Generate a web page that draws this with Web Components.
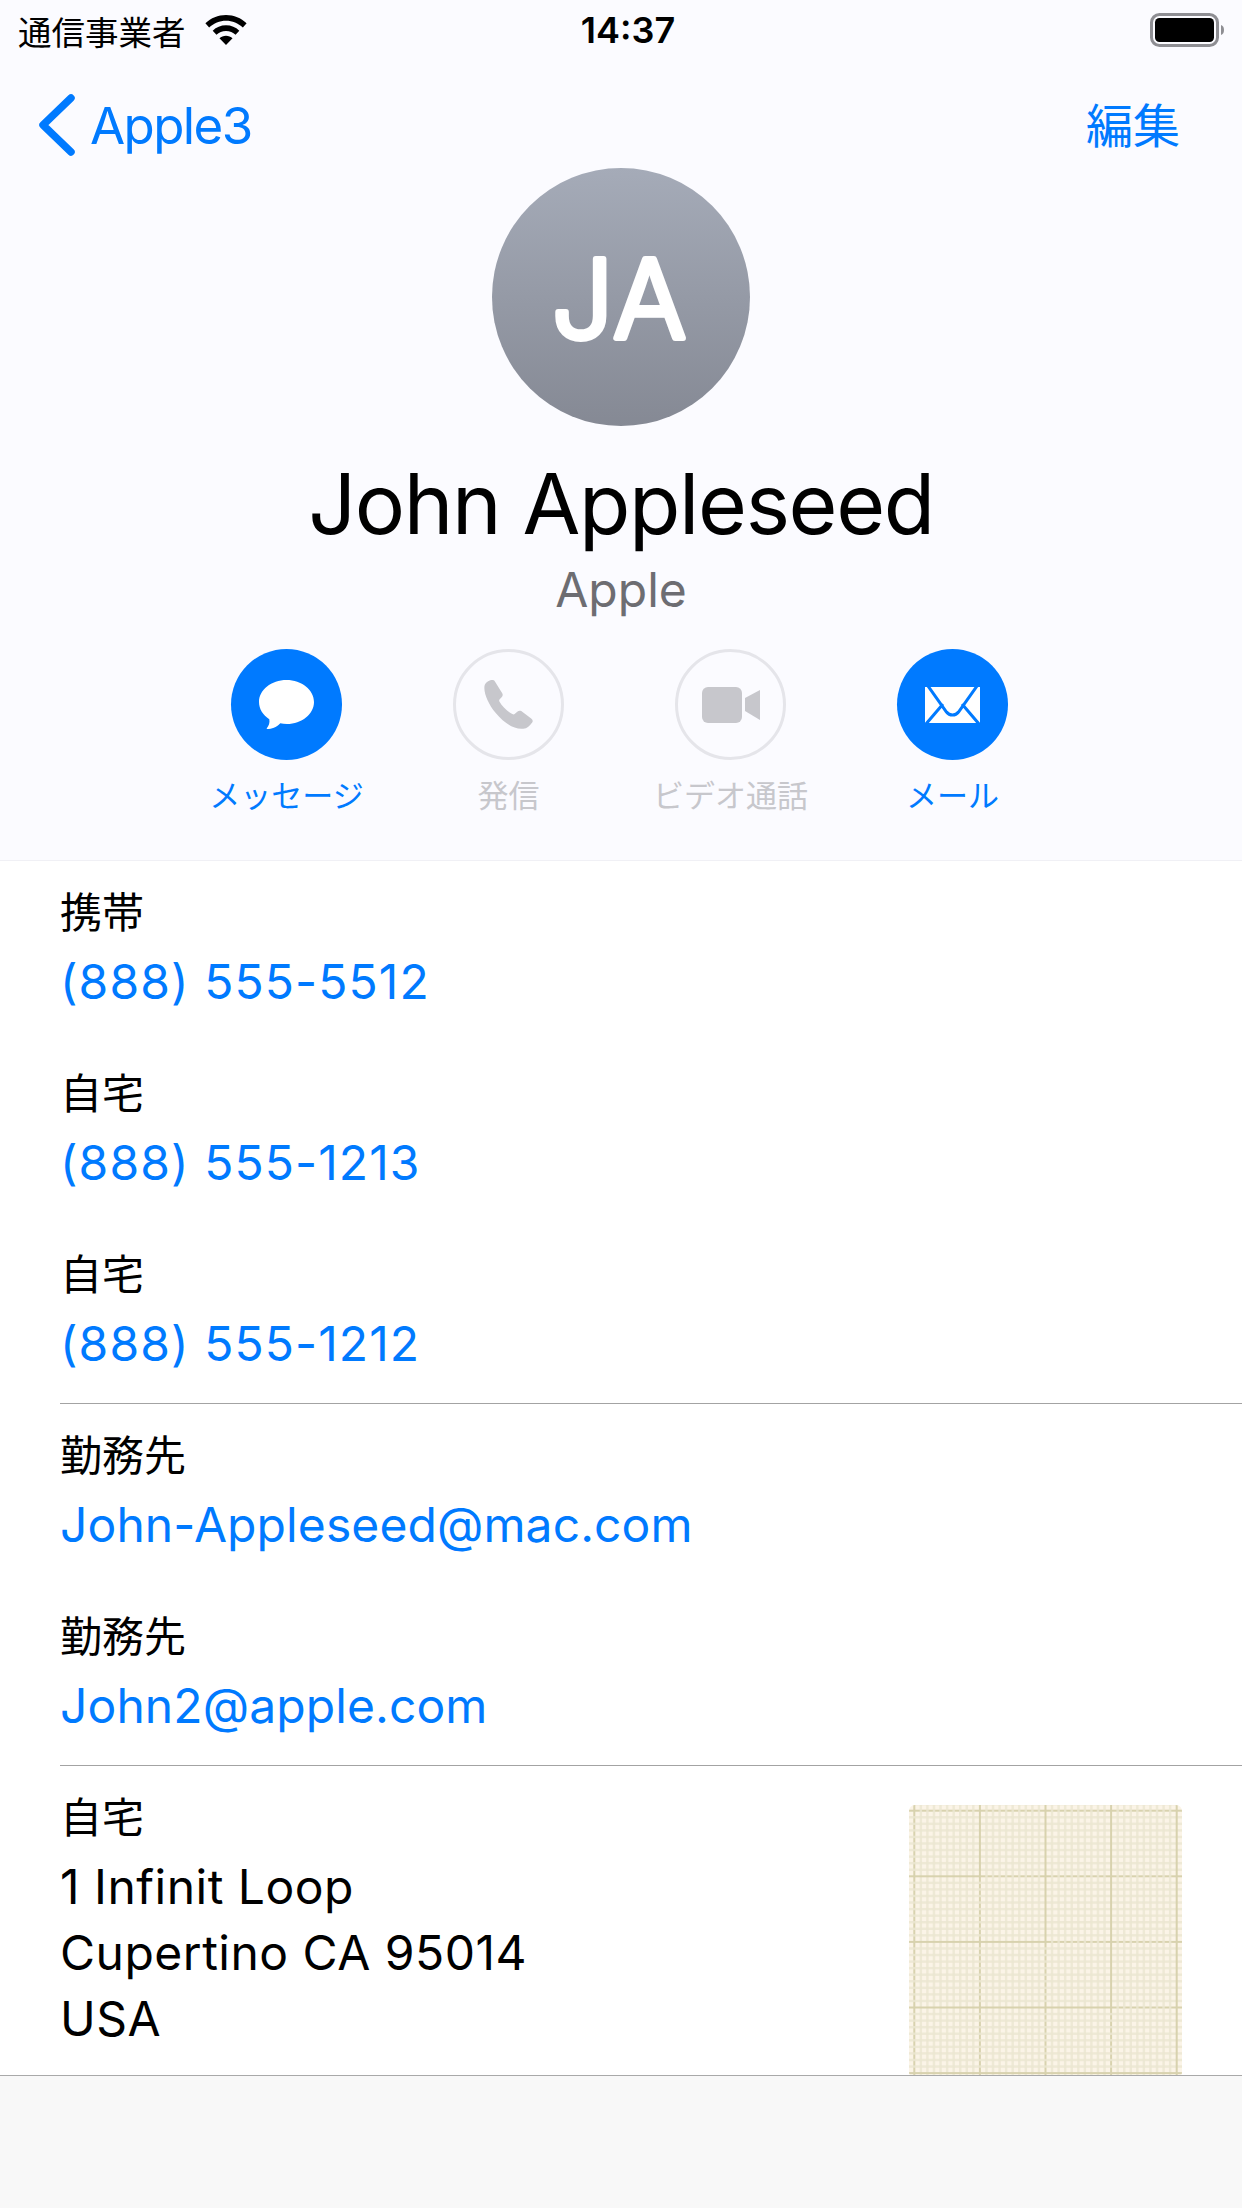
<!DOCTYPE html>
<html lang="ja">
<head>
<meta charset="utf-8">
<title>John Appleseed</title>
<style>
  html, body { margin: 0; padding: 0; background: #fff; }
  body { font-family: Inter, "Noto Sans CJK JP", sans-serif; }
</style>
</head>
<body>
<contact-screen>
  <status-bar slot="status"></status-bar>
  <nav-bar slot="nav" back="Apple3" action="編集"></nav-bar>
  <contact-header slot="header" initials="JA" name="John Appleseed" org="Apple">
    <action-button label="メッセージ" icon="message"></action-button>
    <action-button label="発信" icon="phone" disabled></action-button>
    <action-button label="ビデオ通話" icon="video" disabled></action-button>
    <action-button label="メール" icon="mail"></action-button>
  </contact-header>
  <info-group>
    <info-row label="携帯" phone>(888) 555-5512</info-row>
    <info-row label="自宅" phone>(888) 555-1213</info-row>
    <info-row label="自宅" phone>(888) 555-1212</info-row>
  </info-group>
  <info-group>
    <info-row label="勤務先">John-Appleseed@mac.com</info-row>
    <info-row label="勤務先">John2@apple.com</info-row>
  </info-group>
  <info-group>
    <address-row label="自宅">1 Infinit Loop<br>Cupertino CA 95014<br>USA</address-row>
  </info-group>
</contact-screen>

<script>
const ICONS = {
  message: `<svg width="55" height="50" viewBox="0 0 55 50"><path fill="#fff" d="M27.500 0C12.300 0 0 9.800 0 22c0 7 4 13.200 10.300 17.200.7 3.500-.5 6.500-2.500 9-.3.400 0 .8.500.8 4.300 0 9-1.500 13-5.800 2 .5 4.300.8 6.700.8C42.700 44 55 34.200 55 22S42.700 0 27.500 0z"/></svg>`,
  phone: `<svg width="49" height="49" viewBox="0 0 147 148"><path fill="#c7c7cc" d="M1 18C3 8 13 2 22 0c5-1 9 1 11 5l22 36c2 4 1 8-3 12l-5 5c-2 2-2 4-1 7 9 15 22 29 39 38 3 2 5 2 7 0l8-7c4-4 8-4 12-2l30 22c5 4 6 8 3 12-7 10-15 18-27 19-28 3-58-17-83-47C12 72-2 40 1 18z"/></svg>`,
  video: `<svg width="58" height="36" viewBox="0 0 58 36"><rect width="40" height="36" rx="6" fill="#c7c7cc"/><path fill="#c7c7cc" d="M43 11 58 3v30L43 24z"/></svg>`,
  mail: `<svg width="55" height="36" viewBox="0 0 55 36"><rect width="55" height="36" fill="#fff"/><path d="M3 -1 21.500 25c3 4 9 4 12 0L52 -1M1 37 18 17M54 37 37 17" fill="none" stroke="#007aff" stroke-width="3"/></svg>`
};

class ContactScreen extends HTMLElement {
  constructor() {
    super();
    this.attachShadow({ mode: 'open' });
    this.shadowRoot.innerHTML = `
      <style>
        :host { display: flex; flex-direction: column; width: 1242px; height: 2208px; overflow: hidden; background: #fff; }
        #top { background: #fbfbff; border-bottom: 1px solid #f0f0f5; flex: none; }
        #scroll { flex: 1; min-height: 0; overflow: hidden; }
        #toolbar { flex: none; height: 133px; background: #f8f8f8; border-top: 1px solid #a9a9a9; box-sizing: border-box; }
      </style>
      <div id="top">
        <slot name="status"></slot>
        <slot name="nav"></slot>
        <slot name="header"></slot>
      </div>
      <div id="scroll"><slot></slot></div>
      <div id="toolbar"></div>
    `;
  }
}

class StatusBar extends HTMLElement {
  constructor() {
    super();
    this.attachShadow({ mode: 'open' });
    this.shadowRoot.innerHTML = `
      <style>
        :host { display: grid; grid-template-columns: 1fr auto 1fr; align-items: center; height: 60px; padding: 0 18px; color: #000; }
        #left { display: flex; align-items: center; gap: 19px; font-size: 33.500px; }
        #time { font-size: 36px; font-weight: 600; padding-left: 14px; }
        #right { display: flex; justify-content: flex-end; }
      </style>
      <div id="left">
        <span>通信事業者</span>
        <svg width="42" height="30" viewBox="0 0 44 32"><path d="M22 0C13.500 0 6 3.300 0 8.800l4 4.400C9 8.700 15.200 6 22 6s13 2.700 18 7.200l4-4.400C38 3.300 30.500 0 22 0zM22 11c-5.500 0-10.400 2.200-14.200 5.700l4 4.400C14.500 18.600 18 17 22 17s7.500 1.600 10.200 4.100l4-4.400C32.400 13.200 27.500 11 22 11zM22 22c-2.700 0-5.100 1-7 2.800L22 32l7-7.200C27.100 23 24.700 22 22 22z"/></svg>
      </div>
      <div id="time">14:37</div>
      <div id="right">
        <svg width="74" height="34" viewBox="0 0 74 34"><rect x="1.500" y="1.500" width="66" height="31" rx="8" fill="none" stroke="#8e8e93" stroke-width="3"/><rect x="5" y="5" width="59" height="24" rx="4.500"/><path d="M71 12c2 .5 3 2.500 3 5s-1 4.500-3 5z" fill="#8e8e93"/></svg>
      </div>
    `;
  }
}

class NavBar extends HTMLElement {
  constructor() {
    super();
    this.attachShadow({ mode: 'open' });
    this.shadowRoot.innerHTML = `
      <style>
        :host { display: flex; justify-content: space-between; align-items: center; height: 88px; padding: 42px 62px 0 38px; box-sizing: border-box; color: #007aff; font-size: 51px; }
        #back { display: flex; align-items: center; gap: 15px; letter-spacing: -1.600px; }
        #action { font-size: 47px; margin-top: -5px; }
      </style>
      <div id="back">
        <svg width="37" height="62" viewBox="0 0 37 62"><path d="M33 4 5 31l28 27" fill="none" stroke="#007aff" stroke-width="7.500" stroke-linecap="round" stroke-linejoin="round"/></svg>
        <span></span>
      </div>
      <div id="action"></div>
    `;
    this.shadowRoot.querySelector('#back span').textContent = this.getAttribute('back');
    this.shadowRoot.querySelector('#action').textContent = this.getAttribute('action');
  }
}

class ContactHeader extends HTMLElement {
  constructor() {
    super();
    this.attachShadow({ mode: 'open' });
    this.shadowRoot.innerHTML = `
      <style>
        :host { display: flex; flex-direction: column; align-items: center; height: 712px; box-sizing: border-box; padding-top: 20px; }
        #avatar { width: 258px; height: 258px; border-radius: 50%; background: linear-gradient(#a5abb8, #858994); }
        #avatar svg { display: block; }
        #avatar text { font-family: Inter, sans-serif; font-size: 108px; font-weight: 300; fill: #fff; stroke: #fff; stroke-width: 6px; stroke-linejoin: round; letter-spacing: 2px; text-anchor: middle; }
        #name { font-size: 84px; margin-top: 28px; line-height: 100px; color: #000; letter-spacing: -1.400px; }
        #org { font-size: 48px; color: #6d6d72; line-height: 60px; margin-top: 6px; }
        #actions { display: flex; margin: 29px 0 0 -3px; }
      </style>
      <div id="avatar"><svg width="258" height="258" viewBox="0 0 258 258"><text x="128" y="170"></text></svg></div>
      <div id="name"></div>
      <div id="org"></div>
      <div id="actions"><slot></slot></div>
    `;
    this.shadowRoot.querySelector('#avatar text').textContent = this.getAttribute('initials');
    this.shadowRoot.querySelector('#name').textContent = this.getAttribute('name');
    this.shadowRoot.querySelector('#org').textContent = this.getAttribute('org');
  }
}

class ActionButton extends HTMLElement {
  constructor() {
    super();
    this.attachShadow({ mode: 'open' });
    this.shadowRoot.innerHTML = `
      <style>
        :host { display: flex; flex-direction: column; align-items: center; width: 222px; color: #007aff; font-size: 31px; }
        :host([disabled]) { color: #c7c7cc; }
        #circle { width: 111px; height: 111px; border-radius: 50%; background: #007aff; box-sizing: border-box; display: flex; align-items: center; justify-content: center; }
        #circle svg { display: block; }
        :host([disabled]) #circle { background: none; border: 3px solid #e5e5ea; }
        #label { margin-top: 16px; line-height: 40px; white-space: nowrap; }
      </style>
      <div id="circle"></div>
      <div id="label"></div>
    `;
    this.shadowRoot.querySelector('#circle').innerHTML = ICONS[this.getAttribute('icon')];
    this.shadowRoot.querySelector('#label').textContent = this.getAttribute('label');
  }
}

class InfoGroup extends HTMLElement {
  constructor() {
    super();
    this.attachShadow({ mode: 'open' });
    this.shadowRoot.innerHTML = `
      <style>
        :host { display: block; padding-left: 60px; margin-bottom: -1px; }
        :host(:first-of-type) { margin-top: -1px; }
        #rows { border-bottom: 1px solid #a3a3a3; }
        :host(:last-of-type) #rows { border-bottom: none; }
      </style>
      <div id="rows"><slot></slot></div>
    `;
  }
}

class InfoRow extends HTMLElement {
  constructor() {
    super();
    this.attachShadow({ mode: 'open' });
    this.shadowRoot.innerHTML = `
      <style>
        :host { display: block; height: 181px; box-sizing: border-box; padding-top: 23px; }
        #label { font-size: 42px; line-height: 60px; color: #000; }
        #value { font-size: 48px; line-height: 78px; color: #007aff; letter-spacing: .1px; }
        :host([phone]) #value { letter-spacing: 1.100px; }
      </style>
      <div id="label"></div>
      <div id="value"><slot></slot></div>
    `;
    this.shadowRoot.querySelector('#label').textContent = this.getAttribute('label');
  }
}

class AddressRow extends HTMLElement {
  constructor() {
    super();
    this.attachShadow({ mode: 'open' });
    this.shadowRoot.innerHTML = `
      <style>
        :host { display: flex; justify-content: space-between; padding: 23px 60px 0 0; height: 320px; box-sizing: border-box; }
        #label { font-size: 42px; line-height: 60px; color: #000; }
        #value { font-size: 48px; line-height: 66px; color: #000; margin-top: 6px; letter-spacing: .5px; }
        #map { display: block; width: 273px; height: 273px; margin-top: 17px; border-radius: 6px; background: #fbf4e7; }
      </style>
      <div>
        <div id="label"></div>
        <div id="value"><slot></slot></div>
      </div>
      <svg id="map" viewBox="0 0 273 273"></svg>
    `;
    this.shadowRoot.querySelector('#label').textContent = this.getAttribute('label');

    // graph paper grid: minor lines every 6.56px, every tenth one is a major line
    let lines = '';
    for (let i = -1; i < 42; i++) {
      const major = (i % 10) === 0;
      const w = major ? 2 : 2.4;
      const fill = major ? '#d8d2ae' : '#ebe6d1';
      const x = 5.3 + i * 6.56 - w / 2;
      const y = 5.7 + i * 6.56 - w / 2;
      lines += `<rect x="${x}" y="0" width="${w}" height="273" fill="${fill}" fill-opacity="${major ? 1 : .85}"/>`;
      lines += `<rect x="0" y="${y}" width="273" height="${w}" fill="${fill}" fill-opacity="${major ? 1 : .85}"/>`;
    }
    this.shadowRoot.querySelector('#map').innerHTML = lines;
  }
}

customElements.define('contact-screen', ContactScreen);
customElements.define('status-bar', StatusBar);
customElements.define('nav-bar', NavBar);
customElements.define('contact-header', ContactHeader);
customElements.define('action-button', ActionButton);
customElements.define('info-group', InfoGroup);
customElements.define('info-row', InfoRow);
customElements.define('address-row', AddressRow);
</script>
</body>
</html>
